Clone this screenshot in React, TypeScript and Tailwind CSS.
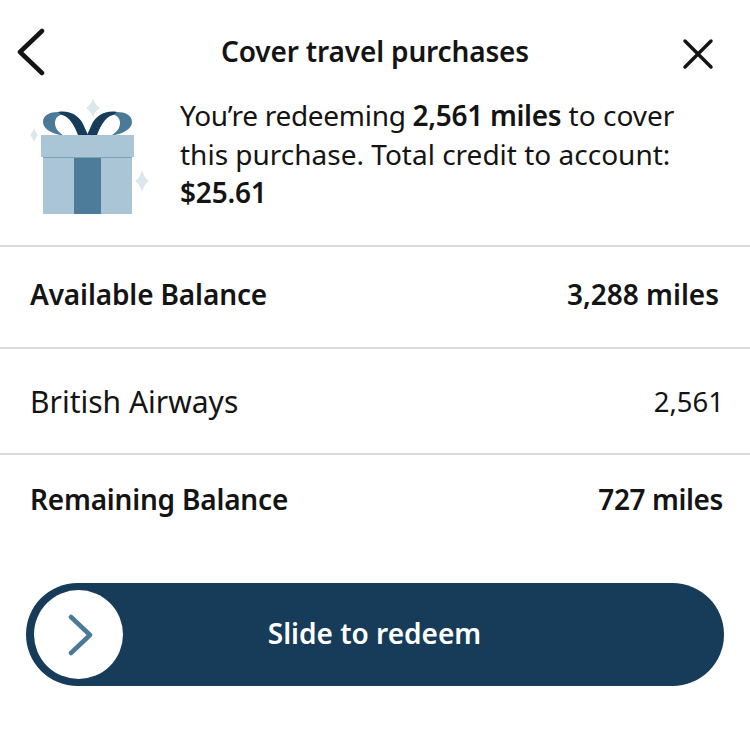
import React from "react";

function Gift() {
  return (
    <svg width="130" height="130" viewBox="19 98 130 130" className="shrink-0">
      <path d="M93 98 C94 103 97 106 100 108 C97 110 94 113 93 118 C92 113 89 110 86 108 C89 106 92 103 93 98 Z" fill="#dbe7ec" />
      <path d="M34 128 C35 131 36 133 38 135 C36 137 35 139 34 142 C33 139 32 137 30 135 C32 133 33 131 34 128 Z" fill="#dbe7ec" />
      <path d="M142 170 C143 175 146 179 149 181 C146 183 143 187 142 192 C141 187 138 183 135 181 C138 179 141 175 142 170 Z" fill="#dbe7ec" />
      <path d="M60 135 C50 133 43 128 43 122 C43 115 50 112 58 112 L64 114 C58 115 55 118 55 123 C55 128 58 132 63 135 Z" fill="#4a7a98" />
      <path d="M58 112 C70 110 79 116 83 124 L88 135 L78 135 C75 127 70 117 62 115 Z" fill="#173c5a" />
      <g transform="translate(175,0) scale(-1,1)">
        <path d="M60 135 C50 133 43 128 43 122 C43 115 50 112 58 112 L64 114 C58 115 55 118 55 123 C55 128 58 132 63 135 Z" fill="#4a7a98" />
        <path d="M58 112 C70 110 79 116 83 124 L88 135 L78 135 C75 127 70 117 62 115 Z" fill="#173c5a" />
      </g>
      <rect x="43" y="157" width="89" height="57" fill="#aac6d6" />
      <rect x="74" y="157" width="27" height="57" fill="#4d7c9b" />
      <rect x="43" y="156" width="89" height="2" fill="#7f9fb3" />
      <rect x="41" y="135" width="93" height="22" fill="#aac6d6" />
    </svg>
  );
}

function Row({ label, value, bold, className, labelClass, valueClass }: { label: string; value: string; bold?: boolean; className: string; labelClass: string; valueClass: string }) {
  return (
    <div className={`flex items-center justify-between border-t-2 border-[#dcdcdc] ${className}`}>
      <span className={`${bold ? "font-semibold" : "font-normal"} ${labelClass}`}>{label}</span>
      <span className={`${bold ? "font-semibold" : "font-normal"} ${valueClass}`}>{value}</span>
    </div>
  );
}

export default function App() {
  return (
    <div className="w-[750px] h-[751px] bg-white text-[#141414] overflow-hidden font-['Noto_Sans',sans-serif] text-[28px] leading-[38px]">
      <header className="flex items-center justify-between h-[96px] pl-[16px] pr-[36px] pt-[8px]">
        <div className="w-[32px]">
          <svg width="32" height="48" viewBox="0 0 32 48" fill="none" stroke="#141414" strokeWidth="4.5" strokeLinecap="round" strokeLinejoin="round">
            <path d="M26 3 L4 24 L26 45" />
          </svg>
        </div>
        <h1 className="ml-[20px] mb-[2px] font-semibold text-[28px] tracking-[-0.15px]">Cover travel purchases</h1>
        <div className="w-[32px] pt-[4px]">
          <svg width="32" height="32" viewBox="0 0 32 32" fill="none" stroke="#141414" strokeWidth="3.5" strokeLinecap="round">
            <path d="M3 3 L29 29 M29 3 L3 29" />
          </svg>
        </div>
      </header>
      <section className="flex h-[149px] pl-[19px]">
        <div className="w-[161px] pt-[2px]">
          <Gift />
        </div>
        <div className="w-[520px] leading-[38.5px]">
          <p>
            <span className="tracking-[-0.3px]">You’re redeeming </span>
            <b className="font-semibold tracking-[-0.3px]">2,561 miles</b> to cover
          </p>
          <p>this purchase. Total credit to account:</p>
          <p className="font-semibold tracking-[-0.2px]">$25.61</p>
        </div>
      </section>
      <Row className="h-[102px] pl-[30px] pr-[31px] pb-[6px]" label="Available Balance" value="3,288 miles" bold labelClass="tracking-[-0.13px]" valueClass="tracking-[0px]" />
      <Row className="h-[106px] pl-[30px] pr-[28px] pt-[1px]" label="British Airways" value="2,561" labelClass="text-[30px]" valueClass="text-[27.5px] mr-[-2px]" />
      <Row className="h-[92px] pl-[30px] pr-[27px] pb-[2px]" label="Remaining Balance" value="727 miles" bold labelClass="tracking-[-0.2px]" valueClass="tracking-[-0.4px]" />
      <div className="mx-[26px] mt-[38px] h-[103px] rounded-full bg-[#173c5a] flex items-center pl-[8px] pr-[8px]">
        <div className="w-[89px] h-[89px] rounded-full bg-white flex items-center justify-center shrink-0">
          <svg width="28" height="44" viewBox="0 0 28 44" fill="none" stroke="#4a7a98" strokeWidth="4.5" strokeLinecap="round" strokeLinejoin="round">
            <path d="M6 4 L25 22 L6 40" />
          </svg>
        </div>
        <span className="flex-1 text-center text-white font-semibold pr-[90px] pb-[4px]">Slide to redeem</span>
      </div>
    </div>
  );
}
